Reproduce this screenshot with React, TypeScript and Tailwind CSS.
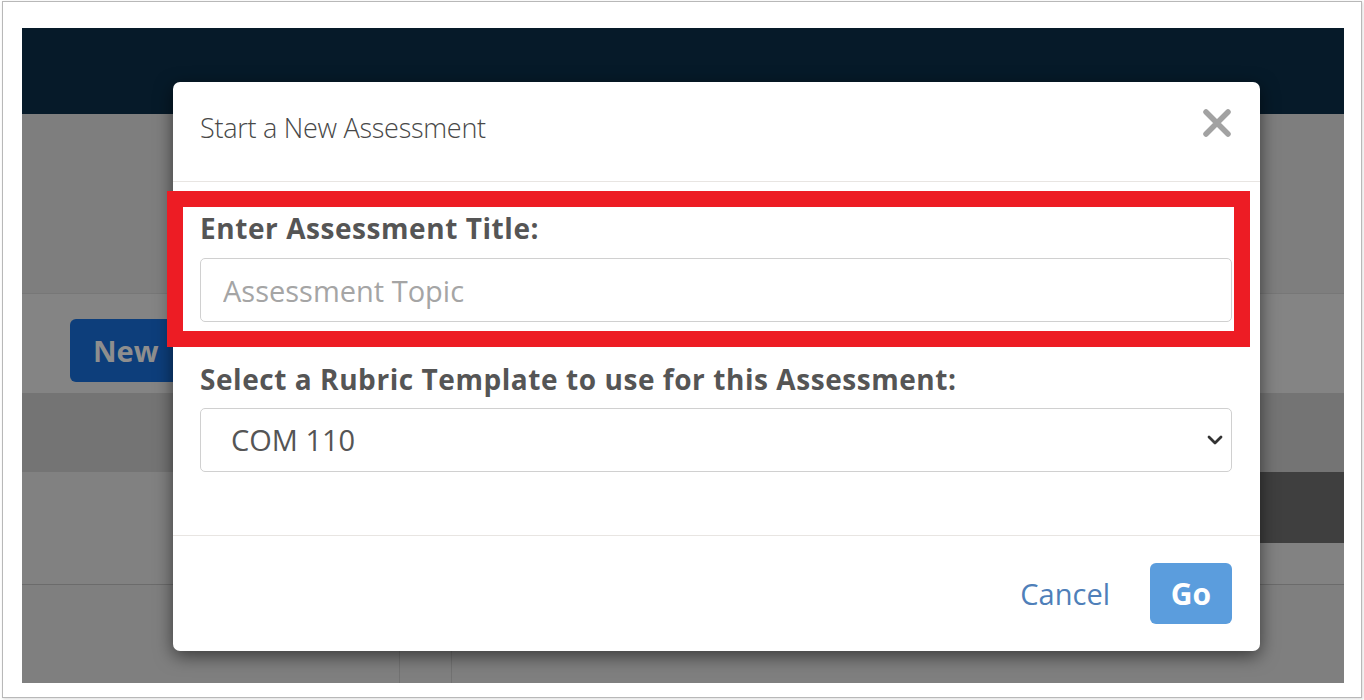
import { ChevronDown } from "lucide-react"

const CloseIcon = () => (
  <svg width="30" height="28" viewBox="0 0 30 28" fill="none">
    <path d="M4 3 L26 25 M26 3 L4 25" stroke="#a2a2a2" strokeWidth="5.5" strokeLinecap="round" />
  </svg>
)

// page that sits behind the dimmed backdrop
const BackgroundPage = () => {
  return (
    <div className="flex h-full w-full flex-col">
      <div className="h-[86px] bg-[#061a29]" />
      <div className="h-[180px] border-b border-[#777] bg-[#7e7e7e]" />
      <div className="flex h-[99px] items-start bg-[#848484] pl-[48px] pt-[25px]">
        <div className="flex h-[63px] w-[160px] items-center rounded-[6px] bg-[#0d3e7b] pl-[23px] text-[29px] font-bold text-[#8e8e8e]">
          New
        </div>
      </div>
      <div className="h-[79px] bg-[#747474]" />
      <div className="flex h-[113px] border-b border-[#6b6b6b]">
        <div className="w-[433px] bg-[#818181]" />
        <div className="flex flex-1 flex-col">
          <div className="h-[71px] bg-[#3f3f3f]" />
          <div className="flex-1 bg-[#828282]" />
        </div>
      </div>
      <div className="flex flex-1 bg-[#7f7f7f]">
        <div className="w-[378px] border-r border-[#727272]" />
        <div className="w-[52px] border-r border-[#727272]" />
        <div className="flex-1" />
      </div>
    </div>
  )
}

const AssessmentModal = () => {
  return (
    <div className="absolute left-[151px] top-[54px] w-[1087px] rounded-[7px] bg-white shadow-[0_5px_18px_rgba(0,0,0,0.55)]">
      <div className="flex h-[100px] items-start justify-between border-b border-[#e8e5e2] pl-[27px] pr-[28px] pt-[30px]">
        <h4 className="text-[27px] font-light leading-[32px] tracking-[-0.01em] text-[#484848]">
          Start a New Assessment
        </h4>
        <button className="mt-[-3px]">
          <CloseIcon />
        </button>
      </div>

      <div className="pb-[63px] pl-[27px] pr-[28px] pt-[9px]">
        <div className="-ml-[33px] -mr-[18px] border-[16px] border-[#ed1c24] pb-[9px] pl-[17px] pr-[2px] pt-[5px]">
          <label className="block text-[28px] font-bold leading-[32px] tracking-[0.02em] text-[#555]">
            Enter Assessment Title:
          </label>
          <input
            className="mt-[14px] block h-[64px] w-full rounded-[5px] border border-[#d0d0d0] px-[22px] text-[29px] text-[#555] outline-none placeholder:text-[#a5a5a5]"
            placeholder="Assessment Topic"
          />
        </div>

        <label className="mt-[16px] block text-[28px] font-bold leading-[32px] tracking-[0.02em] text-[#555]">
          Select a Rubric Template to use for this Assessment:
        </label>
        <div className="mt-[13px] flex h-[64px] w-full items-center justify-between rounded-[5px] border border-[#d0d0d0] pl-[30px] pr-[4px]">
          <span className="text-[29px] text-[#555]">COM 110</span>
          <ChevronDown className="h-[24px] w-[24px] text-[#333]" strokeWidth={2.8} />
        </div>
      </div>

      <div className="flex items-center justify-end gap-[40px] border-t border-[#e8e5e2] pb-[27px] pr-[28px] pt-[27px]">
        <button className="text-[29px] text-[#4f7fb9]">Cancel</button>
        <button className="h-[61px] w-[82px] rounded-[6px] bg-[#5b9ddd] text-[30px] font-bold text-white">
          Go
        </button>
      </div>
    </div>
  )
}

export default function App() {
  return (
    <div className="h-[700px] w-[1364px] overflow-hidden bg-white font-['Open_Sans',sans-serif]">
      <div className="ml-[2px] mt-[1px] h-[697px] w-[1360px] border border-[#b8b8b8] pl-[19px] pt-[26px] shadow-[1px_1px_3px_rgba(0,0,0,0.15)]">
        <div className="relative h-[655px] w-[1322px] overflow-hidden">
          <BackgroundPage />
          <AssessmentModal />
        </div>
      </div>
    </div>
  )
}
